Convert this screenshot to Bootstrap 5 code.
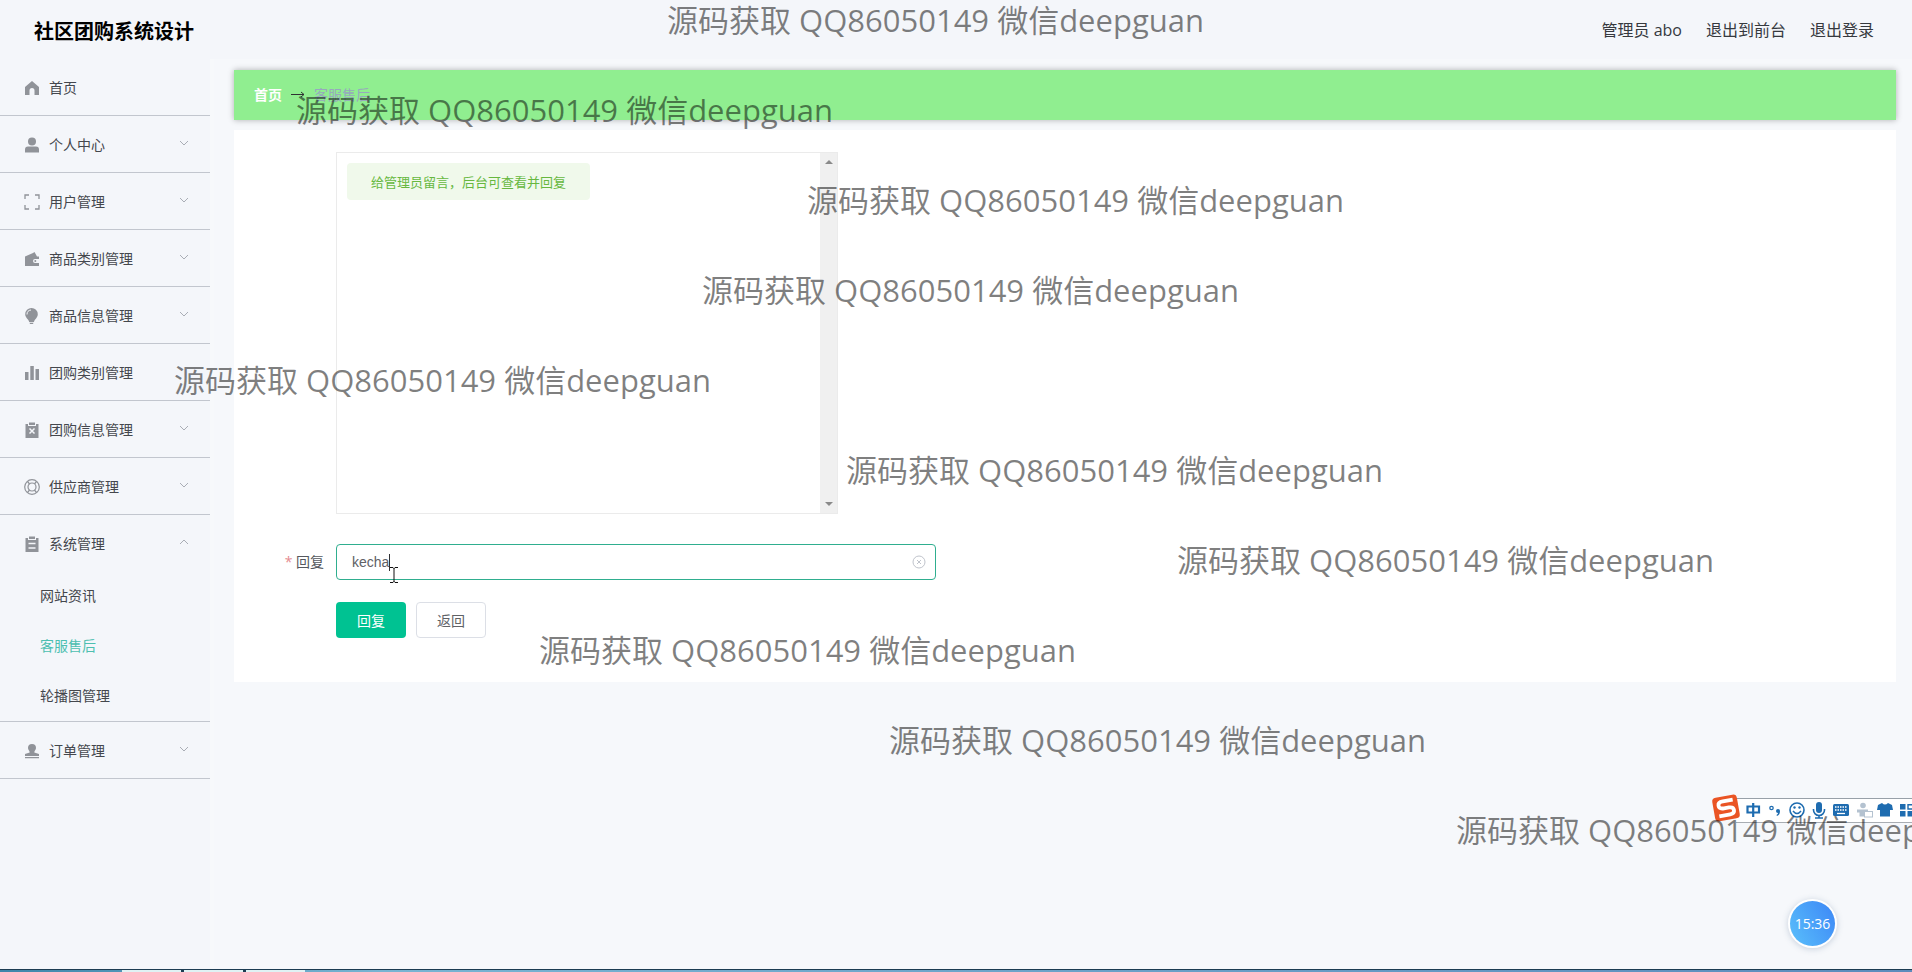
<!DOCTYPE html>
<html lang="zh-CN">
<head>
<meta charset="utf-8">
<meta name="viewport" content="width=device-width, initial-scale=1">
<title>社区团购系统设计</title>
<link href="https://cdn.jsdelivr.net/npm/bootstrap@5.3.0/dist/css/bootstrap.min.css" rel="stylesheet">
<style>
body{font-family:"Open Sans","Noto Sans CJK SC",sans-serif;font-size:14px;line-height:20px;color:#44474d;background:#f6f8fb;overflow:hidden}
a{color:inherit;text-decoration:none}
.topbar{height:59px;background:#f4f6fa;padding:2px 38px 0 34px}
.topbar h1{font-size:20px;line-height:28px;color:#000;padding-top:2px}
.topbar nav{font-size:16px;gap:24px;color:#36393e;padding-bottom:2px}
.side{width:214px;background:#f4f6fa;border-right:4px solid #f7f9fb}
.side-item{height:57px;padding:2px 18px 0 24px;border:0;border-bottom:1px solid #c2c6ce;background:none;width:100%;gap:9px;text-align:left;color:#44474d}
.side-item.opened{height:56px;border-bottom:0}
.side-item svg.ic{width:16px;height:16px;fill:#909399;flex:none}
.side-item svg.chev{width:16px;height:16px;fill:none;stroke:#a9adb5;flex:none;margin-bottom:4px}
.sub-menu{border-bottom:1px solid #c2c6ce}
.sub-menu a{display:block;line-height:50px;padding-left:40px}
.sub-menu a.on{color:#4dbfb0}
.main-col{padding:11px 16px 0 20px}
.crumbs{height:50px;padding:0 20px;gap:8px;background:#90ee90;box-shadow:0 0 6px rgba(0,0,0,.3)}
.crumbs svg{width:16px;height:10px;fill:none;stroke:#303133}
.crumbs .here{color:#97a8be}
.panel{margin-top:10px;background:#fff;padding:22px 20px 44px 102px}
.log-box{max-width:502px;height:362px;border:1px solid #ebebeb}
.bubble{margin:10px;height:37px;line-height:38px;padding:0 24px;font-size:13px;border-radius:4px;background:#f0f9eb;color:#67b83f}
.sb{width:17px;background:#f0f0f0;padding:7px 0}
.sb i{border:4px solid transparent;border-top-width:0;border-bottom-color:#8a8a8a}
.sb i.dn{border-width:4px 4px 0;border-top-color:#8a8a8a}
.reply{max-width:600px;margin-top:30px}
.reply label{right:100%;top:8px;padding-right:12px;white-space:nowrap;color:#55585e}
.reply label b{color:#e58b90;font-weight:400}
.reply .form-control{height:36px;border:1px solid #2fae8f;border-radius:4px;font:14px/20px "Liberation Sans",sans-serif;color:#606266;padding:0 36px 0 15px;box-shadow:none}
.reply .clr{right:10px;top:11px;width:14px;height:14px;padding:0;border:0;background:none}
.reply .clr svg{display:block;fill:none;stroke:#c0c4cc}
.caret{left:53px;top:10px;width:1px;height:17px;background:#303133}
.ibeam{left:54px;top:23px;fill:none;stroke:#111}
.acts{margin-top:22px;gap:10px}
.acts .btn{width:70px;height:36px;padding:0;font-size:14px;border-radius:4px}
.b-ok,.b-ok:hover{background:#00c292;color:#fff;border:0}
.b-back,.b-back:hover{background:#fff;color:#606266;border:1px solid #dcdfe6}
.wm{font-size:31px;line-height:38px;color:rgba(0,0,0,.5);white-space:nowrap;pointer-events:none;z-index:5}
.ime{right:0;top:798px;width:176px;height:25px;background:#fff;border-top:1px solid #98a0a8;border-bottom:1px solid #a8adb3}
.ime svg{right:0;top:-7px}
.clock{right:77px;top:901px;width:45px;height:45px;border-radius:50%;color:#fff;font-size:14px;line-height:45px;text-align:center;background:linear-gradient(60deg,#5ac0fb,#3c86f6);box-shadow:0 0 0 2px #fff,0 1px 6px 2px rgba(60,90,130,.25)}
.taskbar{left:0;right:0;bottom:0;height:3px;background:linear-gradient(90deg,#3e86aa,#78b4d2 20%,#5c8cbc);border-top:1px solid #1c3c52}
.taskbar span{left:122px;width:183px;top:0;height:2px;background:linear-gradient(90deg,#dff2f4 59px,#1c3c52 59px 62px,#dff2f4 62px 121px,#1c3c52 121px 124px,#dff2f4 124px)}
</style>
</head>
<body class="vh-100 position-relative">
<div class="d-flex flex-column h-100">
<header class="topbar d-flex align-items-center justify-content-between">
  <h1 class="m-0 fw-bold">社区团购系统设计</h1>
  <nav class="d-flex"><span>管理员 abo</span><a href="#">退出到前台</a><a href="#">退出登录</a></nav>
</header>
<div class="d-flex flex-grow-1">
<aside class="side flex-shrink-0">
  <a href="#" class="side-item d-flex align-items-center"><svg class="ic" viewBox="0 0 16 16"><path d="M8 1 1 7v8h4.500v-4.500a2.500 2.500 0 0 1 5 0V15H15V7z"/></svg>首页</a>
  <button class="side-item d-flex align-items-center"><svg class="ic" viewBox="0 0 16 16"><circle cx="8" cy="4.500" r="4"/><path d="M1 15.500v-3q0-3 3-3h8q3 0 3 3v3z"/></svg><span class="flex-grow-1">个人中心</span><svg class="chev" viewBox="0 0 16 16"><path d="m4 6 4 4 4-4"/></svg></button>
  <button class="side-item d-flex align-items-center"><svg class="ic" viewBox="0 0 16 16"><path d="M1 5V1h4M11 1h4v4M15 11v4h-4M5 15H1v-4" fill="none" stroke="#909399" stroke-width="1.300"/></svg><span class="flex-grow-1">用户管理</span><svg class="chev" viewBox="0 0 16 16"><path d="m4 6 4 4 4-4"/></svg></button>
  <button class="side-item d-flex align-items-center"><svg class="ic" viewBox="0 0 16 16"><path d="M1 5.500 9 2l1.500-1L13 5.500h2V8h-4a2 2 0 0 0 0 4h4v3H1z"/><circle cx="11.300" cy="10" r="1"/></svg><span class="flex-grow-1">商品类别管理</span><svg class="chev" viewBox="0 0 16 16"><path d="m4 6 4 4 4-4"/></svg></button>
  <button class="side-item d-flex align-items-center"><svg class="ic" viewBox="0 0 16 16"><path d="M7.500 0a6.300 6.300 0 0 1 6.300 6.300c0 3.500-3.300 5-3.800 7.700H5.200C4.700 11.300 1.200 9.800 1.200 6.300A6.300 6.300 0 0 1 7.500 0M5.500 14.800h4l-.5 1.200H6z"/><path d="M3 6.500A4.500 4.500 0 0 1 7 2" fill="none" stroke="#f4f6fa"/></svg><span class="flex-grow-1">商品信息管理</span><svg class="chev" viewBox="0 0 16 16"><path d="m4 6 4 4 4-4"/></svg></button>
  <button class="side-item d-flex align-items-center"><svg class="ic" viewBox="0 0 16 16"><path d="M1 7h3.500v8H1zM6.300 1h3.500v14H6.300zM11.500 4H15v11h-3.500z"/></svg><span class="flex-grow-1">团购类别管理</span></button>
  <button class="side-item d-flex align-items-center"><svg class="ic" viewBox="0 0 16 16"><path d="M1.500 2H4v2h8V2h2.500v14h-13zM5 .5h6V3H5z"/><path d="m5.500 6.500 5 5m0-5-5 5" stroke="#f4f6fa" stroke-width="1.500"/></svg><span class="flex-grow-1">团购信息管理</span><svg class="chev" viewBox="0 0 16 16"><path d="m4 6 4 4 4-4"/></svg></button>
  <button class="side-item d-flex align-items-center"><svg class="ic" viewBox="0 0 16 16"><g fill="none" stroke="#909399" stroke-width="1.200"><circle cx="8" cy="8" r="7.300"/><circle cx="8" cy="8" r="4"/><path d="M3.500 2.500 5.600 5M12.500 2.500 10.400 5M3.500 13.500 5.600 11M12.500 13.500 10.400 11"/></g></svg><span class="flex-grow-1">供应商管理</span><svg class="chev" viewBox="0 0 16 16"><path d="m4 6 4 4 4-4"/></svg></button>
  <button class="side-item opened d-flex align-items-center"><svg class="ic" viewBox="0 0 16 16"><path d="M1.500 2H4v2h8V2h2.500v14h-13zM5 .5h6V3H5z"/><path d="M4.500 7.500h7m-7 4.500h7" stroke="#f4f6fa" stroke-width="1.300"/></svg><span class="flex-grow-1">系统管理</span><svg class="chev" viewBox="0 0 16 16"><path d="m4 10 4-4 4 4"/></svg></button>
  <div class="sub-menu"><a href="#">网站资讯</a><a href="#" class="on">客服售后</a><a href="#">轮播图管理</a></div>
  <button class="side-item d-flex align-items-center"><svg class="ic" viewBox="0 0 16 16"><path d="M8 1a4 4 0 0 1 4 4c0 2-1.700 2.500-1.700 4.500L15 11v2H1v-2l4.700-1.500C5.700 7.500 4 7 4 5a4 4 0 0 1 4-4M1 14h14v1.300H1z"/></svg><span class="flex-grow-1">订单管理</span><svg class="chev" viewBox="0 0 16 16"><path d="m4 6 4 4 4-4"/></svg></button>
</aside>
<main class="main-col flex-grow-1">
  <nav class="crumbs d-flex align-items-center"><a href="#" class="fw-bold text-white">首页</a><svg viewBox="0 0 16 10"><path d="M1 4.500h13M11 2l3 2.500L11 7"/></svg><span class="here">客服售后</span></nav>
  <form class="panel" onsubmit="return false">
    <div class="log-box d-flex justify-content-between">
      <div><div class="bubble">给管理员留言，后台可查看并回复</div></div>
      <div class="sb d-flex flex-column justify-content-between align-items-center"><i></i><i class="dn"></i></div>
    </div>
    <div class="reply position-relative">
      <label for="reply" class="position-absolute"><b>*</b> 回复</label>
      <input id="reply" class="form-control" value="kecha">
      <span class="caret position-absolute"></span>
      <button type="button" class="clr position-absolute" aria-label="清空"><svg width="14" height="14" viewBox="0 0 14 14"><circle cx="7" cy="7" r="6"/><path d="m5 5 4 4m0-4-4 4"/></svg></button>
      <svg class="ibeam position-absolute" width="8" height="16" viewBox="0 0 8 16"><path d="M0 .5h3l1 1 1-1h3M4 1v14M0 15.500h3l1-1 1 1h3"/></svg>
    </div>
    <div class="acts d-flex"><button class="btn b-ok">回复</button><button type="button" class="btn b-back">返回</button></div>
  </form>
</main>
</div>
</div>

<div class="ime position-absolute">
<svg class="position-absolute" width="202" height="34" viewBox="1710 792 202 34">
  <g transform="rotate(-10 1726 808)"><rect x="1713.500" y="796" width="25" height="24" rx="4" fill="#ea5424"/><path d="M1734 801h-10q-5 0-5 3.500t5 3.500h5q4.500 0 4.500 3.500t-4.500 3.500h-11" fill="none" stroke="#fff" stroke-width="3.800"/></g>
  <g fill="none" stroke="#1e6cb0" stroke-width="2.200"><path d="M1747.500 806.500h11.500v6h-11.500zM1753.200 803v14"/><circle cx="1771.500" cy="808" r="1.700" stroke-width="1.300"/><circle cx="1797" cy="810" r="7" stroke-width="1.600"/><path d="M1793 811q4 5 8 0" stroke-width="1.500"/><path d="M1813.500 809v1a5.500 5.500 0 0 0 11 0v-1M1819 815v3M1815 818h8" stroke-width="1.600"/></g>
  <g fill="#1e6cb0"><circle cx="1778" cy="811" r="2"/><path d="M1780 811q0 4-3 5l-.5-1q2-1 1.500-3z"/><circle cx="1794.500" cy="807.500" r="1.200"/><circle cx="1799.500" cy="807.500" r="1.200"/><rect x="1816" y="802" width="6" height="11" rx="3"/><rect x="1833" y="804" width="16" height="12" rx="1.500"/><path d="m1882 803-4 2-1 5h3v6.500h10V810h3l-1-5-4-2q-3 3-6 0"/><path d="M1900 804h5.500v5.500h-5.500zM1900 811h5.500v5.500h-5.500zM1907.500 811h5v5.500h-5z"/></g>
  <path d="M1835 807h12M1835 810h12" stroke="#fff" stroke-width="1.500" stroke-dasharray="1.500 1"/><path d="M1837 813.500h8" stroke="#fff" stroke-width="1.300"/>
  <path d="M1908 804.700h6v4.300h-6z" fill="none" stroke="#1e6cb0" stroke-width="1.400"/>
  <g fill="#b4c2d0"><circle cx="1863" cy="805.500" r="2.800"/><path d="M1857 809.500h11v3h-3.500v4h-5v-4H1857z"/><rect x="1864.500" y="811.500" width="8" height="5.500" fill="#fff" stroke="#b4c2d0"/></g>
</svg>
</div>
<div class="clock position-absolute">15:36</div>
<div class="taskbar position-absolute"><span class="position-absolute"></span></div>

<div class="wm position-absolute" style="left:667px;top:1px">源码获取 QQ86050149 微信deepguan</div>
<div class="wm position-absolute" style="left:296px;top:91px">源码获取 QQ86050149 微信deepguan</div>
<div class="wm position-absolute" style="left:807px;top:181px">源码获取 QQ86050149 微信deepguan</div>
<div class="wm position-absolute" style="left:702px;top:271px">源码获取 QQ86050149 微信deepguan</div>
<div class="wm position-absolute" style="left:174px;top:361px">源码获取 QQ86050149 微信deepguan</div>
<div class="wm position-absolute" style="left:846px;top:451px">源码获取 QQ86050149 微信deepguan</div>
<div class="wm position-absolute" style="left:1177px;top:541px">源码获取 QQ86050149 微信deepguan</div>
<div class="wm position-absolute" style="left:539px;top:631px">源码获取 QQ86050149 微信deepguan</div>
<div class="wm position-absolute" style="left:889px;top:721px">源码获取 QQ86050149 微信deepguan</div>
<div class="wm position-absolute" style="left:1456px;top:811px">源码获取 QQ86050149 微信deepguan</div>
<script src="https://cdn.jsdelivr.net/npm/bootstrap@5.3.0/dist/js/bootstrap.bundle.min.js"></script>
</body>
</html>
